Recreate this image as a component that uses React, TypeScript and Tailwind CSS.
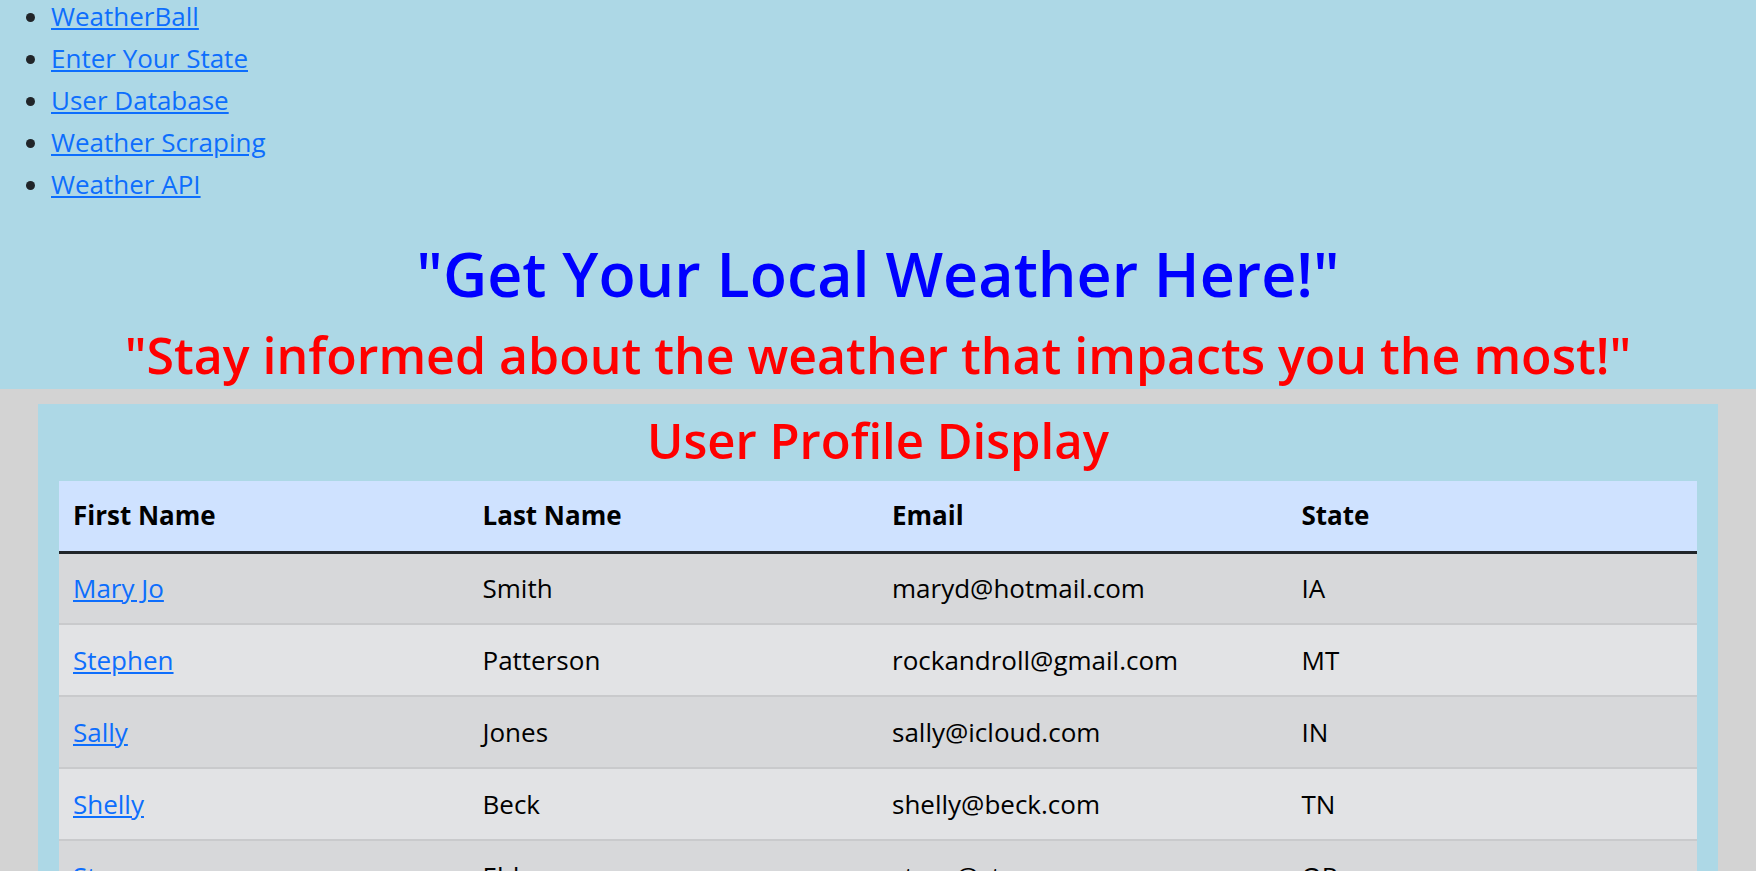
const links = ["WeatherBall", "Enter Your State", "User Database", "Weather Scraping", "Weather API"];

const users = [
  { first: "Mary Jo", last: "Smith", email: "maryd@hotmail.com", state: "IA" },
  { first: "Stephen", last: "Patterson", email: "rockandroll@gmail.com", state: "MT" },
  { first: "Sally", last: "Jones", email: "sally@icloud.com", state: "IN" },
  { first: "Shelly", last: "Beck", email: "shelly@beck.com", state: "TN" },
  { first: "Steve", last: "Elder", email: "steve@steve.com", state: "OR" },
];

export default function App() {
  return (
    <div className="min-h-screen w-full bg-[#d3d3d3] font-['Open_Sans','Liberation_Sans',sans-serif] text-[#212529]">
      {/* Header */}
      <header className="bg-[#add8e6]">
        <ul className="list-disc pl-[51px] mt-[-5px] mb-[27px] text-[26px] leading-[42px]">
          {links.map((l) => (
            <li key={l} className="marker:text-[#212529]">
              <a href="#" className="text-[#0d6efd] underline">
                {l}
              </a>
            </li>
          ))}
        </ul>
        <h1 className="text-center text-[61px] leading-[84px] font-semibold text-[#0000ff]">
          "Get Your Local Weather Here!"
        </h1>
        <h2 className="mt-[6px] text-center text-[50px] leading-[67px] font-semibold text-[#ff0000]">
          "Stay informed about the weather that impacts you the most!"
        </h2>
      </header>

      {/* User table */}
      <main className="px-[38px] pt-[15px]">
        <div className="bg-[#add8e6] px-[21px]">
          <h3 className="pb-[5px] text-center text-[49px] leading-[72px] font-semibold text-[#ff0000]">
            User Profile Display
          </h3>
          <table className="w-full table-fixed border-collapse text-[26px] text-black">
            <thead>
              <tr className="bg-[#cfe2ff] border-b-[3px] border-[#212529]">
                {["First Name", "Last Name", "Email", "State"].map((h) => (
                  <th key={h} className="h-[71px] px-[14px] text-left font-bold">
                    {h}
                  </th>
                ))}
              </tr>
            </thead>
            <tbody>
              {users.map((u, i) => (
                <tr
                  key={u.email}
                  className={`border-b-2 border-[#c9cacc] ${i % 2 === 0 ? "bg-[#d7d8da]" : "bg-[#e2e3e5]"}`}
                >
                  <td className="h-[72px] px-[14px]">
                    <a href="#" className="text-[#0d6efd] underline">
                      {u.first}
                    </a>
                  </td>
                  <td className="px-[14px]">{u.last}</td>
                  <td className="px-[14px]">{u.email}</td>
                  <td className="px-[14px]">{u.state}</td>
                </tr>
              ))}
            </tbody>
          </table>
        </div>
      </main>
    </div>
  );
}
